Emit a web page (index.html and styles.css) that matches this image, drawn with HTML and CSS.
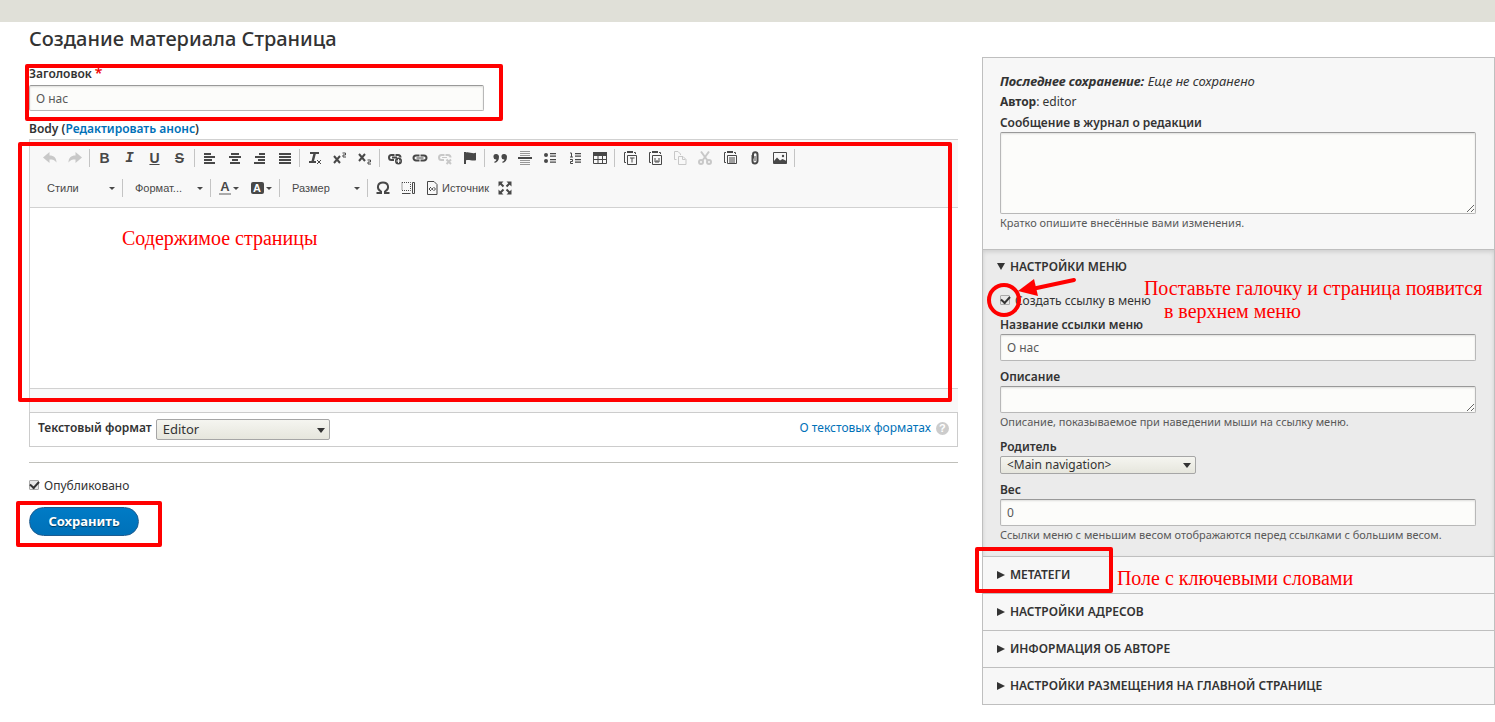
FILE: index.html
```html
<!DOCTYPE html>
<html lang="ru">
<head>
<meta charset="utf-8">
<meta name="viewport" content="width=device-width, initial-scale=1">
<title>Создание материала Страница</title>
<link rel="stylesheet" href="styles.css">
</head>
<body>
<header class="topbar"></header>
<form class="layout">
  <main class="main">
    <h1 class="page-title">Создание материала Страница</h1>

    <div class="title-field">
      <label class="label" for="title">Заголовок<span class="required">*</span></label>
      <input class="text-input" id="title" type="text" value="О нас">
      <span class="frame frame-title"></span>
    </div>

    <div class="label body-label">Body (<a class="link" href="#">Редактировать анонс</a>)</div>

    <div class="editor">
      <div class="toolbar">
        <div class="tool-row">
          <button type="button" class="tool off" aria-label="Отменить"><svg viewBox="0 0 16 16"><path d="M1 7.500 7.500 2V5.500C12 5.500 14.500 8 14.500 12.500 12.500 10 11 9.500 7.500 9.500V13Z"/></svg></button>
          <button type="button" class="tool off" aria-label="Повторить"><svg viewBox="0 0 16 16"><path d="M15 7.500 8.500 2V5.500C4 5.500 1.500 8 1.500 12.500 3.500 10 5 9.500 8.500 9.500V13Z"/></svg></button>
          <span class="sep"></span>
          <button type="button" class="tool glyph b" aria-label="Полужирный">B</button>
          <button type="button" class="tool glyph i" aria-label="Курсив">I</button>
          <button type="button" class="tool glyph u" aria-label="Подчеркнутый">U</button>
          <button type="button" class="tool glyph s" aria-label="Зачеркнутый">S</button>
          <span class="sep"></span>
          <button type="button" class="tool" aria-label="По левому краю"><svg viewBox="0 0 16 16"><path d="M2 3h7v2H2zM2 6h11v2H2zM2 9h8v2H2zM2 12h11v2H2z"/></svg></button>
          <button type="button" class="tool" aria-label="По центру"><svg viewBox="0 0 16 16"><path d="M4 3h8v2H4zM2 6h12v2H2zM5 9h6v2H5zM3 12h10v2H3z"/></svg></button>
          <button type="button" class="tool" aria-label="По правому краю"><svg viewBox="0 0 16 16"><path d="M7 3h6v2H7zM3 6h10v2H3zM6 9h7v2H6zM2 12h11v2H2z"/></svg></button>
          <button type="button" class="tool" aria-label="По ширине"><svg viewBox="0 0 16 16"><path d="M2 3h12v2H2zM2 6h12v2H2zM2 9h12v2H2zM2 12h12v2H2z"/></svg></button>
          <span class="sep"></span>
          <button type="button" class="tool" aria-label="Убрать форматирование"><svg viewBox="0 0 16 16"><path d="M3 2h9v2H8.800L7 11H9v2H2v-2H4.500L6.300 4H3z"/><path class="ln" d="m10 10 4 4m0-4-4 4"/></svg></button>
          <button type="button" class="tool" aria-label="Надстрочный индекс"><svg viewBox="0 0 16 16"><path class="ln2" d="m2 6 6 7m0-7-6 7"/><path class="ln" d="M10.500 3h3v2h-2.500v2h3"/></svg></button>
          <button type="button" class="tool" aria-label="Подстрочный индекс"><svg viewBox="0 0 16 16"><path class="ln2" d="m2 4 6 7m0-7-6 7"/><path class="ln" d="M10.500 10h3v2h-2.500v2h3"/></svg></button>
          <span class="sep"></span>
          <button type="button" class="tool" aria-label="Вставить ссылку"><svg viewBox="0 0 16 16"><path class="ln2" d="M7 10H4.500a2.500 2.500 0 0 1 0-5H7.500M8.500 5h2.500a2.500 2.500 0 0 1 2.500 2.500M5 7.500h5"/><circle cx="11.500" cy="11" r="3.500"/><path class="cut" d="M11.500 9v4M9.500 11h4"/></svg></button>
          <button type="button" class="tool" aria-label="Ссылка"><svg viewBox="0 0 16 16"><path class="ln2" d="M7.500 10.500H4a2.500 2.500 0 0 1 0-5h3.500M8.500 5.500H12a2.500 2.500 0 0 1 0 5H8.500"/><path class="ln" d="M4.500 8h7"/></svg></button>
          <button type="button" class="tool off" aria-label="Убрать ссылку"><svg viewBox="0 0 16 16"><path class="ln2" d="M7 10H4.500a2.500 2.500 0 0 1 0-5h3M8.500 5h2.500a2.500 2.500 0 0 1 2.500 2.500"/><path class="ln" d="M5 7.500h5"/><path class="ln2" d="m9.500 9.500 4.500 4.500m0-4.500L9.500 14"/></svg></button>
          <button type="button" class="tool" aria-label="Якорь"><svg viewBox="0 0 16 16"><path d="M2 2h2v12H2zM4 2.500c3-1 6 1.500 10 .3v7.400c-4 1-7-1-10 0z"/></svg></button>
          <span class="sep"></span>
          <button type="button" class="tool" aria-label="Цитата"><svg viewBox="0 0 16 16"><path d="M4 4a2.700 2.700 0 0 1 3 2.800C7 10.500 5.300 12.500 2.500 13v-1.500c1.200-.3 1.800-1 1.900-2A2.700 2.700 0 1 1 4 4zM12 4a2.700 2.700 0 0 1 3 2.800c0 3.700-1.700 5.700-4.500 6.200v-1.500c1.200-.3 1.800-1 1.900-2A2.700 2.700 0 1 1 12 4z"/></svg></button>
          <button type="button" class="tool" aria-label="Горизонтальная линия"><svg viewBox="0 0 16 16"><path d="M1 7h14v2H1z"/><path class="thin" d="M3 1h10v1H3zM3 3h10v1H3zM3 5h10v1H3zM3 10h10v1H3zM3 12h10v1H3zM3 14h10v1H3z"/></svg></button>
          <button type="button" class="tool" aria-label="Маркированный список"><svg viewBox="0 0 16 16"><circle cx="4" cy="5" r="2"/><circle cx="4" cy="11" r="2"/><path d="M8 3h6v1.300H8zM8 5.500h6v1.300H8zM8 9h6v1.300H8zM8 11.500h6v1.300H8z"/></svg></button>
          <button type="button" class="tool" aria-label="Нумерованный список"><svg viewBox="0 0 16 16"><path d="M8 3h6v1.200H8zM8 5.500h6v1.200H8zM8 9h6v1.200H8zM8 11.500h6v1.200H8z"/><path class="ln" d="M3 3h1.500v4M3 7h3M3 9.500h2.500V11.500H3.500V13.500H6"/></svg></button>
          <button type="button" class="tool" aria-label="Таблица"><svg viewBox="0 0 16 16"><path d="M1 2h14v4H1z"/><path class="ln" d="M1.500 5v8.500h13V5M1.500 9.500h13M6 5v8.500M10.500 5v8.500"/></svg></button>
          <span class="sep"></span>
          <button type="button" class="tool" aria-label="Вставить только текст"><svg viewBox="0 0 16 16"><path class="ln" d="M4 2.500H2.500v10H4M12 2.500h1.500V4"/><path d="M5 1h6v2H5z"/><path class="ln" d="M5.500 5.500h9v9h-9zM8 8h4.500M10 8v4.500"/></svg></button>
          <button type="button" class="tool" aria-label="Вставить из Word"><svg viewBox="0 0 16 16"><path class="ln" d="M4 2.500H2.500v10H4M12 2.500h1.500V4"/><path d="M5 1h6v2H5z"/><path class="ln" d="M5.500 5.500h9v9h-9zM8 8v4h4V8M10 10v2"/></svg></button>
          <button type="button" class="tool off" aria-label="Копировать"><svg viewBox="0 0 16 16"><path class="ln" d="M4.500 9.500H2.500v-8H6l2.500 2.500v1M6.500 6.500h4.500l3 3v5H6.500zM10.500 6.500v3h3"/></svg></button>
          <button type="button" class="tool off" aria-label="Вырезать"><svg viewBox="0 0 16 16"><path class="ln2" d="m4 1.500 6.500 9M12 1.500l-6.500 9"/><circle class="ln2" cx="4" cy="12" r="2"/><circle class="ln2" cx="12" cy="12" r="2"/></svg></button>
          <button type="button" class="tool" aria-label="Вставить"><svg viewBox="0 0 16 16"><path class="ln" d="M4 2.500H2.500v10H4M12 2.500h1.500V4"/><path d="M5 1h6v2H5z"/><path class="ln" d="M5.500 5.500h9v8h-9zM7 8h6M7 10h6M7 12h6"/></svg></button>
          <button type="button" class="tool" aria-label="Файл"><svg viewBox="0 0 16 16"><path class="ln2" d="M5.500 5v6a2.500 2.500 0 0 0 5 0V4.500a2 2 0 0 0-4.500 0V8.500"/><path class="ln" d="M8 6v5"/></svg></button>
          <button type="button" class="tool" aria-label="Изображение"><svg viewBox="0 0 16 16"><path class="ln" d="M1.500 2.500h13v11h-13z"/><path d="M2 11 5 7.500l3 3 2.500-1.500 4 2v2.500H2z"/><circle cx="11" cy="6" r="1.200"/></svg></button>
          <span class="sep"></span>
        </div>
        <div class="tool-row">
          <button type="button" class="combo"><span>Стили</span><i class="caret"></i></button>
          <span class="sep"></span>
          <button type="button" class="combo"><span>Формат...</span><i class="caret"></i></button>
          <span class="sep"></span>
          <button type="button" class="color" aria-label="Цвет текста"><span class="ink">A</span><i class="caret"></i></button>
          <button type="button" class="color" aria-label="Цвет фона"><span class="fill">A</span><i class="caret"></i></button>
          <span class="sep"></span>
          <button type="button" class="combo"><span>Размер</span><i class="caret"></i></button>
          <span class="sep"></span>
          <button type="button" class="tool" aria-label="Специальный символ"><svg viewBox="0 0 16 16"><path class="ln2" d="M1.500 13H6v-1.500C1 8.500 2.500 2.500 8 2.500s7 6 2 9V13h4.500"/></svg></button>
          <button type="button" class="tool" aria-label="Показать блоки"><svg viewBox="0 0 16 16"><path class="ln dash" d="M2 2.500h8.500v8H2z"/><path class="ln" d="M2 13.500h8.500M12.500 2.500h2v11h-2z"/></svg></button>
          <button type="button" class="source"><svg viewBox="0 0 16 16"><path class="ln" d="M3.500 1.500h6.500l3 3v10h-9.500z"/><path class="ln" d="M7 7 5 9l2 2M9.500 7l2 2-2 2"/><circle cx="8.200" cy="9" r="1"/></svg>Источник</button>
          <button type="button" class="tool" aria-label="Развернуть"><svg viewBox="0 0 16 16"><path d="M1.500 1.500H6.500L1.500 6.500zM14.500 1.500H9.500L14.500 6.500zM1.500 14.500h5L1.500 9.500zM14.500 14.500h-5L14.500 9.500z"/><path class="ln2" d="m3.500 3.500 3 3m6-3-3 3m-6 6 3-3m6 3-3-3"/></svg></button>
        </div>
      </div>
      <div class="canvas" contenteditable="true" role="textbox" aria-label="Body"></div>
      <div class="editor-foot"></div>
      <span class="frame frame-editor"></span>
      <span class="note note-editor">Содержимое страницы</span>
    </div>

    <div class="format">
      <label class="label" for="format">Текстовый формат</label>
      <span class="select-wrap wide"><select class="select" id="format"><option>Editor</option></select></span>
      <a class="link help" href="#">О текстовых форматах<span class="q">?</span></a>
    </div>

    <div class="actions">
      <label class="check"><input type="checkbox" checked><span>Опубликовано</span></label>
      <div class="save"><button type="button" class="primary">Сохранить</button><span class="frame frame-save"></span></div>
    </div>
  </main>

  <aside class="side">
    <section class="meta">
      <p class="meta-line saved"><em><b>Последнее сохранение:</b> Еще не сохранено</em></p>
      <p class="meta-line"><b>Автор</b>: editor</p>
      <label class="label" for="log">Сообщение в журнал о редакции</label>
      <textarea class="text-input log" id="log"></textarea>
      <p class="hint">Кратко опишите внесённые вами изменения.</p>
    </section>
    <details class="group" open>
      <summary class="summary">Настройки меню</summary>
      <div class="group-body">
        <div class="menu-check">
          <label class="check"><input type="checkbox" checked><span>Создать ссылку в меню</span></label>
          <svg class="pointer" viewBox="0 0 92 42"><circle cx="18" cy="23" r="15"/><path d="M88 3 46 12"/><path class="head" d="M32 14 48 2 52 19Z"/></svg>
          <span class="note note-menu">Поставьте галочку и страница появится<br><span class="indent">в верхнем меню</span></span>
        </div>
        <div class="field">
          <label class="label" for="link-title">Название ссылки меню</label>
          <input class="text-input" id="link-title" type="text" value="О нас">
        </div>
        <div class="field">
          <label class="label" for="desc">Описание</label>
          <textarea class="text-input desc" id="desc"></textarea>
          <p class="hint">Описание, показываемое при наведении мыши на ссылку меню.</p>
        </div>
        <div class="field">
          <label class="label" for="parent">Родитель</label>
          <span class="select-wrap"><select class="select low" id="parent"><option>&lt;Main navigation&gt;</option></select></span>
        </div>
        <div class="field">
          <label class="label" for="weight">Вес</label>
          <input class="text-input" id="weight" type="text" value="0">
          <p class="hint">Ссылки меню с меньшим весом отображаются перед ссылками с большим весом.</p>
        </div>
      </div>
    </details>
    <details class="group">
      <summary class="summary">Метатеги<span class="frame frame-tags"></span><span class="note note-tags">Поле с ключевыми словами</span></summary>
    </details>
    <details class="group"><summary class="summary">Настройки адресов</summary></details>
    <details class="group"><summary class="summary">Информация об авторе</summary></details>
    <details class="group"><summary class="summary">Настройки размещения на главной странице</summary></details>
  </aside>
</form>
</body>
</html>
```
FILE: styles.css
```css
* { box-sizing: border-box; }

body {
  margin: 0;
  background: #fff;
  color: #333;
  font: 12px/18px "Noto Sans", "Open Sans", sans-serif;
}

p { margin: 0; }
button, input, select, textarea { font: inherit; color: inherit; }

.topbar { height: 22px; background: #e0e0d8; }

.layout {
  display: grid;
  grid-template-columns: 65fr 35fr;
  align-items: start;
  padding-left: 29px;
}

.main { min-width: 0; padding-right: 24px; }
.page-title { margin: 4px 0 14px; font-size: 20px; line-height: 26px; font-weight: 500; }
.label { display: block; font-weight: 600; line-height: 18px; }
.required { margin-left: 3px; color: #e00; font-size: 14px; line-height: 14px; }
.link { color: #0071b8; text-decoration: none; }

.text-input {
  display: block;
  width: 100%;
  height: 27px;
  margin: 0;
  padding: 3px 6px;
  border: 1px solid #b8b8b8;
  border-top-color: #999;
  border-radius: 2px;
  background: #fcfcfa;
  box-shadow: inset 0 1px 2px rgba(0, 0, 0, .12);
  color: #595959;
}

.title-field { position: relative; width: 49%; padding-bottom: 9px; }
.title-field .label { margin-bottom: 4px; line-height: 14px; }
.title-field .text-input { height: 26px; }
.body-label { margin-bottom: 1px; }

/* Editor */
.editor { position: relative; border: 1px solid #d1d1d1; border-width: 1px 0 0 1px; }
.toolbar { padding: 3px 0 4px 7px; border-bottom: 1px solid #d1d1d1; background: #f8f8f8; color: #484848; }
.tool-row { display: flex; align-items: center; height: 30px; }
.tool, .combo, .color, .source {
  display: flex;
  align-items: center;
  height: 26px;
  padding: 0;
  border: 0;
  background: none;
}
.tool { width: 25px; justify-content: center; }
.tool svg, .source svg { width: 16px; height: 16px; fill: currentColor; }
svg .ln, svg .ln2 { fill: none; stroke: currentColor; stroke-width: 1; }
svg .ln2 { stroke-width: 2; }
svg .thin { opacity: .55; }
svg .dash { stroke-dasharray: 1 1; }
svg .cut { stroke: #f8f8f8; }
.tool.off { color: #c8c8c8; }
.glyph { font: 700 14px/16px "Liberation Sans", Arial, sans-serif; }
.i { font: italic 700 14px/16px "Liberation Mono", monospace; }
.u { text-decoration: underline; }
.s { text-decoration: line-through; }
.sep { width: 1px; height: 18px; margin: 0 2px; background: #c4c4c4; }
.combo {
  justify-content: space-between;
  width: 83px;
  padding: 0 5px 0 10px;
  font: 11px/16px "Liberation Sans", Arial, sans-serif;
}
.caret { border: 3px solid transparent; border-top-color: #484848; border-bottom: 0; }
.color { gap: 2px; width: 32px; justify-content: center; font: 700 13px/12px "Liberation Sans", Arial, sans-serif; }
.ink { border-bottom: 2px solid #aaa; padding: 0 1px; }
.fill { width: 13px; border-radius: 2px; background: #484848; color: #fff; font-size: 11px; text-align: center; }
.source { gap: 2px; margin-left: 4px; margin-right: 4px; font: 11px/16px "Liberation Sans", Arial, sans-serif; }
.canvas { height: 180px; background: #fff; outline: 0; }
.editor-foot { height: 24px; border-top: 1px solid #d1d1d1; background: #f8f8f8; }

.format {
  display: flex;
  align-items: flex-start;
  gap: 4px;
  height: 35px;
  padding: 6px 8px;
  border: 1px solid #ccc;
}
.help { display: flex; align-items: center; gap: 5px; margin-left: auto; }
.q {
  width: 13px;
  height: 13px;
  border-radius: 50%;
  background: #ccc;
  color: #fff;
  font: 700 11px/13px "Liberation Sans", Arial, sans-serif;
  text-align: center;
}

.select-wrap { position: relative; display: block; width: 196px; }
.select-wrap.wide { width: 174px; }
.select-wrap::after {
  content: "";
  position: absolute;
  top: 50%;
  right: 5px;
  margin-top: -2px;
  border: 4px solid transparent;
  border-top: 5px solid #333;
  border-bottom: 0;
  pointer-events: none;
}
.select {
  display: block;
  width: 100%;
  height: 21px;
  padding: 0 6px 2px;
  border: 1px solid #a6a6a6;
  border-radius: 2px;
  appearance: none;
  background: linear-gradient(#f5f5f0, #e6e6dd);
  font-size: 13px;
  line-height: 16px;
}
.select.low { height: 18px; padding-bottom: 0; font-size: 12px; }

.actions { margin-top: 15px; padding-top: 14px; border-top: 1px solid #bfbfba; }
.check { display: flex; align-items: center; gap: 5px; }
.check input {
  display: grid;
  place-items: center;
  width: 10px;
  height: 10px;
  margin: 0 0 3px;
  border: 1px solid #aaa;
  border-radius: 1px;
  appearance: none;
  background: #e8e8e8;
}
.check input:checked::before {
  content: "";
  width: 7px;
  height: 4px;
  margin-bottom: 3px;
  border: solid #333;
  border-width: 0 0 2px 2px;
  transform: rotate(-48deg);
}
.save { position: relative; margin-top: 12px; }
.primary {
  display: block;
  width: 110px;
  height: 29px;
  padding: 0 0 2px;
  border: 1px solid #1e5c90;
  border-radius: 15px;
  background: linear-gradient(#007bc6, #0071b8);
  color: #fff;
  font-size: 13px;
  font-weight: 700;
  text-shadow: 0 1px 1px rgba(0, 0, 0, .5);
}

/* Sidebar */
.side { min-width: 0; margin-top: 35px; border: 1px solid #bfbfbf; background: #f7f7f7; }
.meta { padding: 14px 18px 17px 17px; }
.meta-line { height: 21px; line-height: 18px; }
.saved { font-size: 13px; }
.log { height: 82px; resize: vertical; }
.hint { color: #595959; font-size: 11px; line-height: 18px; }
.group { border-top: 1px solid #bfbfbf; }
.summary {
  position: relative;
  display: flex;
  align-items: center;
  gap: 5px;
  height: 36px;
  padding: 0 14px;
  font-weight: 600;
  text-transform: uppercase;
  list-style: none;
}
.summary::before {
  content: "";
  border: solid transparent;
  border-width: 4px 0 4px 8px;
  border-left-color: #333;
}
.group[open] { background: #ebebeb; box-shadow: inset 0 2px 4px rgba(0, 0, 0, .12); }
.group[open] > .summary { height: 33px; }
.group[open] > .summary::before { border-width: 7px 4px 0; border-color: #333 transparent transparent; }
.group-body { padding: 9px 18px 12px 17px; }
.field { padding-bottom: 7px; }
.field:last-child { padding-bottom: 0; }
.desc { resize: vertical; }
.menu-check { position: relative; padding-bottom: 6px; }

/* Annotations */
.frame { position: absolute; border: 4px solid #f00; border-radius: 2px; pointer-events: none; }
.frame-title { inset: -2px -19px -1px -4px; }
.frame-editor { inset: 2px 6px 10px -12px; }
.frame-save { top: -6px; left: -13px; width: 146px; height: 46px; }
.frame-tags { top: -10px; left: -8px; width: 138px; height: 46px; z-index: 1; }
.note {
  position: absolute;
  color: #f00;
  font: 20px/23px "Liberation Serif", "Times New Roman", serif;
  text-transform: none;
  white-space: nowrap;
}
.note-editor { top: 87px; left: 92px; }
.note-menu { top: -15px; left: 144px; }
.note-tags { top: 10px; left: 134px; }
.indent { padding-left: 20px; }
.pointer { position: absolute; top: -15px; left: -14px; width: 92px; height: 42px; fill: none; stroke: #f00; stroke-width: 4; stroke-linecap: round; }
.pointer .head { fill: #f00; stroke: none; }
```
